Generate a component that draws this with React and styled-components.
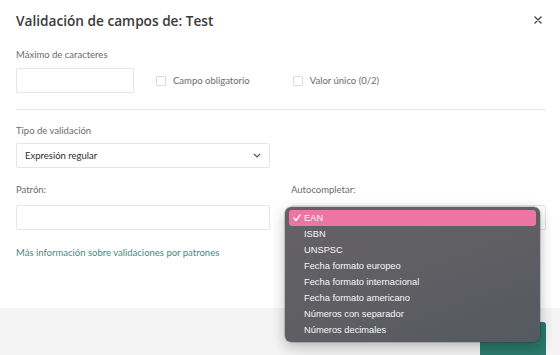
import styled, { createGlobalStyle } from "styled-components";

const GlobalStyle = createGlobalStyle`
  html, body {
    margin: 0;
    padding: 0;
    background: #ffffff;
  }
  body {
    font-family: "Lato", "Open Sans", sans-serif;
    color: #333;
  }
`;

const options = [
  "EAN",
  "ISBN",
  "UNSPSC",
  "Fecha formato europeo",
  "Fecha formato internacional",
  "Fecha formato americano",
  "Números con separador",
  "Números decimales",
];

const Modal = styled.div`
  width: 560px;
  height: 355px;
  display: flex;
  flex-direction: column;
  background: #fff;
  overflow: hidden;
`;

const Header = styled.div`
  display: flex;
  align-items: center;
  justify-content: space-between;
  padding: 6px 15px 0 16px;
  height: 28px;
`;

const Title = styled.h2`
  margin: 0;
  font-family: "Open Sans", sans-serif;
  font-size: 13.65px;
  font-weight: 600;
  color: #3a3a3a;
`;

const Close = styled.button`
  border: none;
  background: none;
  padding: 0;
  width: 14px;
  height: 14px;
  display: flex;
  align-items: center;
  justify-content: center;
  cursor: pointer;
`;

const Body = styled.div`
  flex: 1;
  padding: 15px 14px 0 16px;
`;

const Label = styled.div`
  font-size: 9.5px;
  line-height: 11px;
  color: #6b6b6b;
  margin-bottom: ${(p) => p.$mb || "8px"};
`;

const Row = styled.div`
  display: flex;
  align-items: center;
`;

const Input = styled.div`
  width: ${(p) => p.$w || "254px"};
  height: 25px;
  box-sizing: border-box;
  border: 1px solid #e6e6e6;
  border-radius: 2px;
  background: #fff;
`;

const Check = styled.label`
  display: flex;
  align-items: center;
  gap: 7px;
  font-size: 9.5px;
  color: #6b6b6b;
  margin-left: ${(p) => p.$ml};
`;

const Box = styled.span`
  width: 10px;
  height: 10px;
  border: 1px solid #dcdcdc;
  border-radius: 1px;
  box-sizing: border-box;
`;

const Divider = styled.hr`
  border: none;
  border-top: 1px solid #e8e8e8;
  margin: 16px 0 15px;
`;

const Select = styled.div`
  width: 254px;
  height: 25px;
  box-sizing: border-box;
  border: 1px solid #e6e6e6;
  border-radius: 2px;
  display: flex;
  align-items: center;
  justify-content: space-between;
  padding: 0 8px;
  font-size: 9.5px;
  color: #2e2e2e;
  margin-bottom: 16px;
`;

const Columns = styled.div`
  display: grid;
  grid-template-columns: 254px 255px;
  column-gap: 21px;
`;

const Field = styled.div`
  position: relative;
`;

const Link = styled.a`
  display: block;
  margin-top: 17px;
  font-size: 9.5px;
  color: #3f8a82;
  text-decoration: none;
`;

const Footer = styled.div`
  height: 47px;
  background: #f4f4f5;
  display: flex;
  justify-content: flex-end;
  padding: 14px 14px 0 0;
  box-sizing: border-box;
`;

const Primary = styled.button`
  width: 66px;
  height: 40px;
  border: none;
  border-radius: 3px;
  background: #2b7a6c;
`;

const Menu = styled.ul`
  position: absolute;
  left: -6px;
  top: 2px;
  width: 255px;
  margin: 0;
  padding: 3px 4px 4px;
  list-style: none;
  box-sizing: border-box;
  border-radius: 6px;
  background: linear-gradient(160deg, #646266 0%, #5f5e63 55%, #545960 100%);
  box-shadow: 0 4px 14px rgba(0, 0, 0, 0.28), 0 0 0 0.5px rgba(0, 0, 0, 0.3);
  font-family: "Liberation Sans", Arial, sans-serif;
  z-index: 10;
`;

const Item = styled.li`
  position: relative;
  height: 16px;
  line-height: 16px;
  padding-left: 15px;
  font-size: 9.3px;
  color: #f7f7f7;
  border-radius: 3px;
  background: ${(p) => (p.$active ? "#ec75a6" : "transparent")};
`;

const Tick = styled.svg`
  position: absolute;
  left: 4px;
  top: 4px;
`;

export default function App() {
  return (
    <>
      <GlobalStyle />
      <Modal>
        <Header>
          <Title>Validación de campos de: Test</Title>
          <Close aria-label="Cerrar">
            <svg width="8" height="8" viewBox="0 0 8 8">
              <path d="M1 1L7 7M7 1L1 7" stroke="#444" strokeWidth="1.4" strokeLinecap="round" />
            </svg>
          </Close>
        </Header>
        <Body>
          <Label>Máximo de caracteres</Label>
          <Row>
            <Input $w="118px" />
            <Check $ml="22px">
              <Box />
              Campo obligatorio
            </Check>
            <Check $ml="43px">
              <Box />
              Valor único (0/2)
            </Check>
          </Row>
          <Divider />
          <Label $mb="7px">Tipo de validación</Label>
          <Select>
            Expresión regular
            <svg width="8" height="5" viewBox="0 0 8 5">
              <path d="M1 1L4 4L7 1" stroke="#555" strokeWidth="1.2" fill="none" />
            </svg>
          </Select>
          <Columns>
            <div>
              <Label $mb="10px">Patrón:</Label>
              <Input />
            </div>
            <div>
              <Label $mb="10px">Autocompletar:</Label>
              <Field>
                <Input $w="255px" />
                <Menu>
                  {options.map((o, i) => (
                    <Item key={o} $active={i === 0}>
                      {i === 0 && (
                        <Tick width="8" height="8" viewBox="0 0 8 8">
                          <path d="M1 4.3L3 6.5L7 1" stroke="#fff" strokeWidth="1.3" fill="none" strokeLinecap="round" strokeLinejoin="round" />
                        </Tick>
                      )}
                      {o}
                    </Item>
                  ))}
                </Menu>
              </Field>
            </div>
          </Columns>
          <Link href="#">Más información sobre validaciones por patrones</Link>
        </Body>
        <Footer>
          <Primary />
        </Footer>
      </Modal>
    </>
  );
}
